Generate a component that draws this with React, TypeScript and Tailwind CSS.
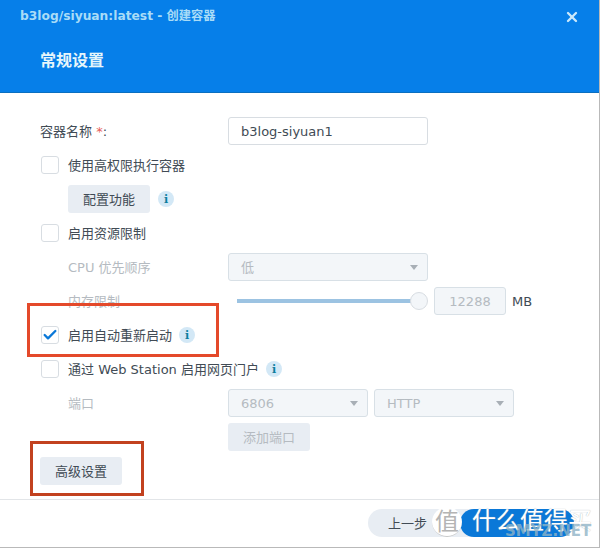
import { ReactNode } from 'react'
import { Check, X } from 'lucide-react'

const font = "font-['DejaVu_Sans','Noto_Sans_CJK_SC',sans-serif]"

function Info() {
  return (
    <span className="w-4 h-4 rounded-full bg-[#d3e8f6] flex items-center justify-center text-[11px] font-bold text-[#0b7f9e] font-['DejaVu_Serif',serif]">
      i
    </span>
  )
}

function Box({ checked }: { checked?: boolean }) {
  return (
    <span className="w-[18px] h-[18px] ml-px rounded-[3px] border border-[#d8dde2] bg-white flex items-center justify-center shrink-0">
      {checked && <Check className="w-4 h-4 text-[#0a78d8]" strokeWidth={3.5} />}
    </span>
  )
}

function CheckRow({ label, checked, info }: { label: string; checked?: boolean; info?: boolean }) {
  return (
    <div className="h-7 flex items-center">
      <Box checked={checked} />
      <span className="ml-[9px] text-[#414b55]">{label}</span>
      {info && <span className="ml-[7px]"><Info /></span>}
    </div>
  )
}

function Row({ label, muted, children }: { label: ReactNode; muted?: boolean; children: ReactNode }) {
  return (
    <div className="h-7 flex items-center">
      <span className={`w-[188px] shrink-0 ${muted ? 'text-[#b5bbc1] pl-7' : 'text-[#414b55]'}`}>{label}</span>
      {children}
    </div>
  )
}

function Select({ value, width }: { value: string; width: string }) {
  return (
    <div className={`${width} h-7 pl-3 pr-[9px] rounded-[3px] border border-[#d8e0e6] bg-[#f3f6f9] flex items-center justify-between text-[#b5bbc1]`}>
      <span>{value}</span>
      <span className="w-0 h-0 border-x-4 border-x-transparent border-t-[5px] border-t-[#a8afb6]" />
    </div>
  )
}

function Btn({ children, muted }: { children: ReactNode; muted?: boolean }) {
  return (
    <button className={`w-[82px] h-7 rounded-[3px] bg-[#e8edf3] ${muted ? 'text-[#b5bbc1]' : 'text-[#414b55]'}`}>
      {children}
    </button>
  )
}

export default function App() {
  return (
    <div className={`${font} relative w-[602px] h-[548px] overflow-hidden bg-white text-[13px] leading-none`}>
      <div className="w-[600px] h-[548px] border-r border-b border-[#b9b9b9] flex flex-col">
        <header className="h-[93px] bg-[#067fe9] border-b border-[#0b6fc0] shrink-0">
          <div className="h-[33px] pl-5 pr-[19px] flex items-center justify-between">
            <span className="text-[12.25px] font-bold text-[#a9dcf7]">b3log/siyuan:latest - 创建容器</span>
            <X className="w-4 h-4 text-[#cbe9fb]" strokeWidth={3.5} />
          </div>
          <div className="pl-10 pt-5 text-[16px] font-bold text-[#e6f6fb]">常规设置</div>
        </header>

        <main className="flex-1 pt-6 pl-10 flex flex-col gap-1.5">
          <Row label={<>容器名称 <span className="text-[#e8625a]">*</span>:</>}>
            <div className="w-[200px] h-7 px-3 rounded-[3px] border border-[#d8dde2] flex items-center text-[#414b55]">b3log-siyuan1</div>
          </Row>
          <CheckRow label="使用高权限执行容器" />
          <div className="h-7 pl-7 flex items-center gap-2">
            <Btn>配置功能</Btn>
            <Info />
          </div>
          <CheckRow label="启用资源限制" />
          <Row label="CPU 优先顺序" muted>
            <Select value="低" width="w-[200px]" />
          </Row>
          <Row label="内存限制" muted>
            <div className="w-[200px] pl-[9px] flex items-center">
              <div className="flex-1 h-1 bg-[#9cc3e2]" />
              <div className="w-[18px] h-[18px] rounded-full border border-[#d8dde2] bg-[#f3f6f9] -ml-px" />
            </div>
            <div className="ml-1.5 w-[72px] h-7 rounded-[3px] border border-[#d8e0e6] bg-[#f3f6f9] flex items-center justify-center text-[#b5bbc1]">12288</div>
            <span className="ml-1.5 text-[#414b55]">MB</span>
          </Row>
          <CheckRow label="启用自动重新启动" checked info />
          <CheckRow label="通过 Web Station 启用网页门户" info />
          <Row label="端口" muted>
            <div className="flex gap-1.5">
              <Select value="6806" width="w-[140px]" />
              <Select value="HTTP" width="w-[140px]" />
            </div>
          </Row>
          <div className="pl-[188px]"><Btn muted>添加端口</Btn></div>
          <Btn>高级设置</Btn>
        </main>

        <footer className="h-[48px] border-t border-[#e2e5e8] pt-[9px] pr-[25px] flex justify-end shrink-0">
          <div className="w-[206px] h-7 rounded-full bg-[#e8edf3] flex">
            <span className="pl-5 h-7 flex items-center text-[#414b55]">上一步</span>
            <span className="ml-auto w-[114px] h-7 rounded-full bg-[#0a78d8]" />
          </div>
        </footer>
      </div>

      {/* annotations and watermark on top of the screenshot */}
      <div className="absolute left-[27px] top-[303px] w-[192px] h-[54px] border-[3px] border-[#e4492a]" />
      <div className="absolute left-[30px] top-[441px] w-[114px] h-[55px] border-[3px] border-[#c2411f]" />
      <div className="absolute left-[432px] top-[507px] w-[30px] h-[30px] rounded-full bg-white border-b border-[#c8c8c8] flex items-center justify-center text-[24px] text-[#b4b4b4]">值</div>
      <div className="absolute left-[472px] top-[509px] text-[24px] text-white whitespace-nowrap [text-shadow:0_0_1px_#9aa5ad]">什么值得买</div>
      <div className="absolute left-[505px] top-[524px] text-[15px] font-bold text-[#8fb3c6]/80 whitespace-nowrap">SMYZ.NET</div>
    </div>
  )
}
